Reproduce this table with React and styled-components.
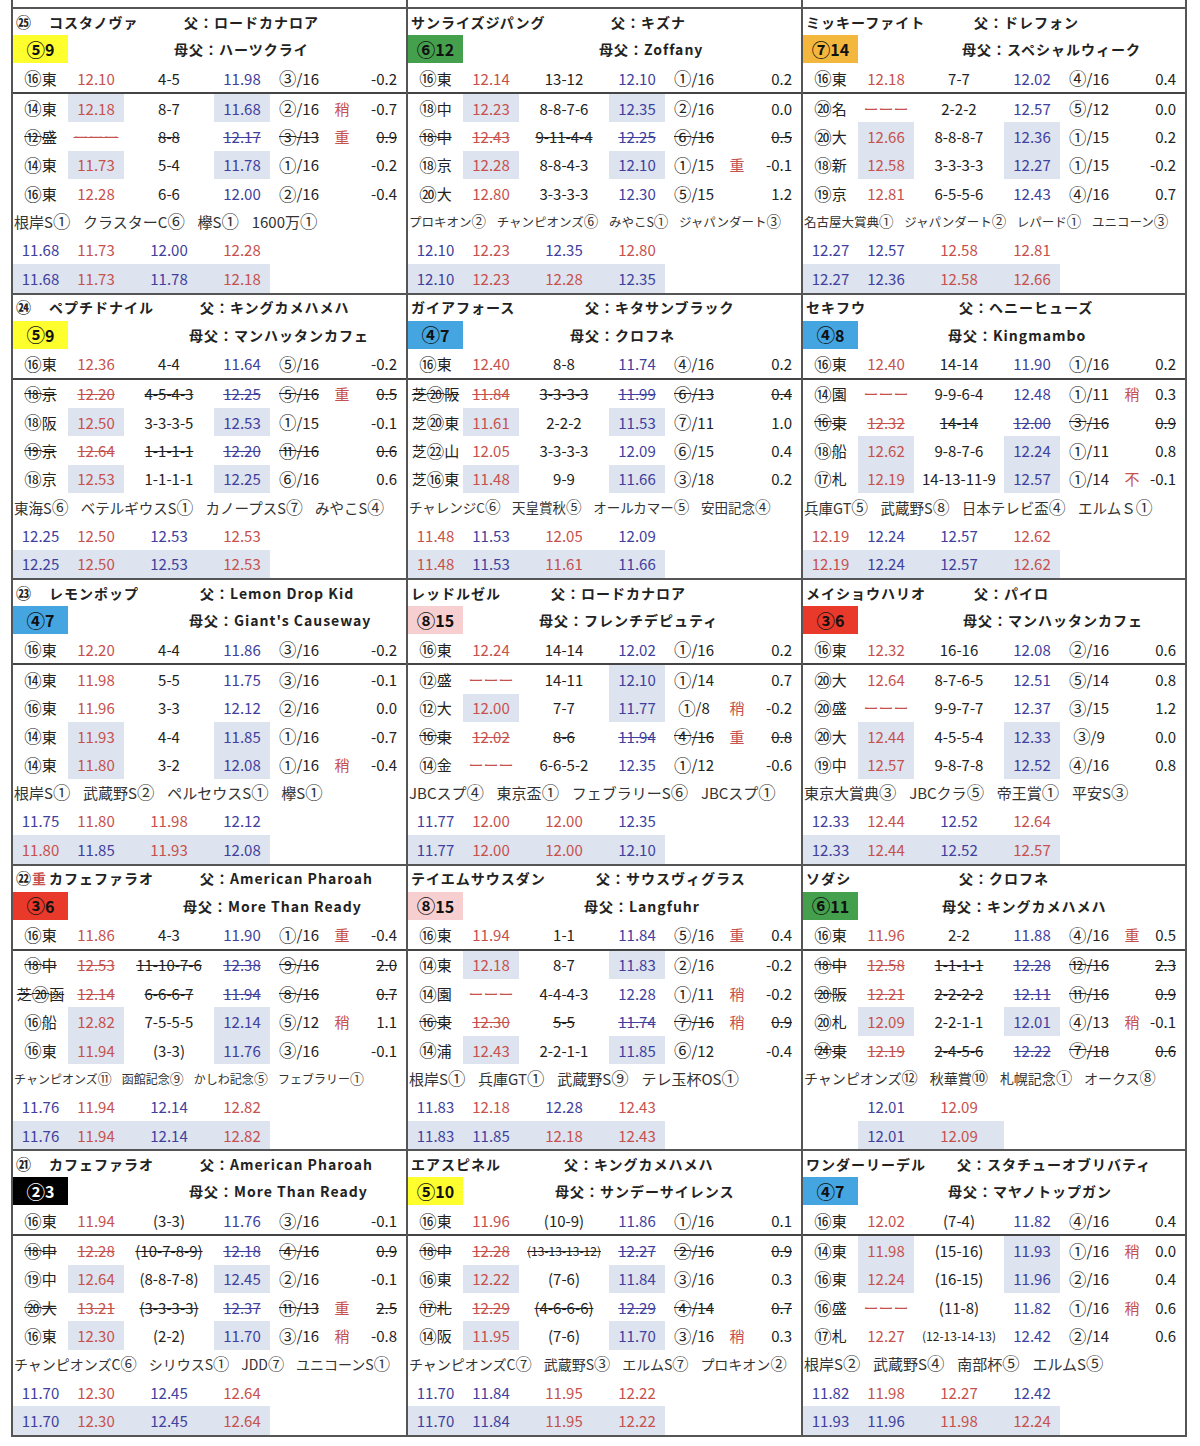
import React from 'react';
import styled, { createGlobalStyle, css } from 'styled-components';

const RED = '#c6514d';
const BLUE = '#40409e';
const HL = '#dde3ef';
const LINE = '#555';

const GlobalStyle = createGlobalStyle`
  html, body {
    margin: 0;
    padding: 0;
    background: #fff;
  }
  body {
    font-family: "Noto Sans CJK JP", "Noto Sans", sans-serif;
    color: #222;
  }
  * {
    box-sizing: border-box;
  }
`;

const WAKU = {
  1: ['#fff', '#111'],
  2: ['#000', '#fff'],
  3: ['#e8392b', '#111'],
  4: ['#45a5e0', '#111'],
  5: ['#ffff2e', '#111'],
  6: ['#45a04d', '#111'],
  7: ['#f3b73d', '#111'],
  8: ['#f8cfd0', '#111'],
};

const horses = [
  {
    no: '㉕', name: 'コスタノヴァ', sire: 'ロードカナロア', sireAt: 171, dam: 'ハーツクライ', damAt: 161, waku: 5, ban: 9,
    main: ['⑯東', '12.10', '4-5', '11.98', '③/16', '', '-0.2', ''],
    past: [
      ['⑭東', '12.18', '8-7', '11.68', '②/16', '稍', '-0.7', '24'],
      ['⑫盛', 'ーーー', '8-8', '12.17', '③/13', '重', '0.9', 's'],
      ['⑭東', '11.73', '5-4', '11.78', '①/16', '', '-0.2', '24'],
      ['⑯東', '12.28', '6-6', '12.00', '②/16', '', '-0.4', ''],
    ],
    wins: ['根岸S①', 'クラスターC⑥', '欅S①', '1600万①'], winSize: 15,
    nums: ['b11.68', 'r11.73', 'b12.00', 'r12.28'],
    nums2: ['b11.68', 'r11.73', 'b11.78', 'r12.18'],
  },
  {
    name: 'サンライズジパング', sire: 'キズナ', sireAt: 203, dam: 'Zoffany', damAt: 191, waku: 6, ban: 12,
    main: ['⑯東', '12.14', '13-12', '12.10', '①/16', '', '0.2', ''],
    past: [
      ['⑱中', '12.23', '8-8-7-6', '12.35', '②/16', '', '0.0', '24'],
      ['⑱中', '12.43', '9-11-4-4', '12.25', '⑥/16', '', '0.5', 's'],
      ['⑱京', '12.28', '8-8-4-3', '12.10', '①/15', '重', '-0.1', '24'],
      ['⑳大', '12.80', '3-3-3-3', '12.30', '⑤/15', '', '1.2', ''],
    ],
    wins: ['プロキオン②', 'チャンピオンズ⑥', 'みやこS①', 'ジャパンダート③'], winSize: 12.5,
    nums: ['b12.10', 'r12.23', 'b12.35', 'r12.80'],
    nums2: ['b12.10', 'r12.23', 'r12.28', 'b12.35'],
  },
  {
    name: 'ミッキーファイト', sire: 'ドレフォン', sireAt: 171, dam: 'スペシャルウィーク', damAt: 159, waku: 7, ban: 14,
    main: ['⑯東', '12.18', '7-7', '12.02', '④/16', '', '0.4', ''],
    past: [
      ['⑳名', 'ーーー', '2-2-2', '12.57', '⑤/12', '', '0.0', ''],
      ['⑳大', '12.66', '8-8-8-7', '12.36', '①/15', '', '0.2', '24'],
      ['⑱新', '12.58', '3-3-3-3', '12.27', '①/15', '', '-0.2', '24'],
      ['⑲京', '12.81', '6-5-5-6', '12.43', '④/16', '', '0.7', ''],
    ],
    wins: ['名古屋大賞典①', 'ジャパンダート②', 'レパード①', 'ユニコーン③'], winSize: 12.5,
    nums: ['b12.27', 'b12.57', 'r12.58', 'r12.81'],
    nums2: ['b12.27', 'b12.36', 'r12.58', 'r12.66'],
  },
  {
    no: '㉔', name: 'ペプチドナイル', sire: 'キングカメハメハ', sireAt: 187, dam: 'マンハッタンカフェ', damAt: 176, waku: 5, ban: 9,
    main: ['⑯東', '12.36', '4-4', '11.64', '⑤/16', '', '-0.2', ''],
    past: [
      ['⑱京', '12.20', '4-5-4-3', '12.25', '⑤/16', '重', '0.5', 's'],
      ['⑱阪', '12.50', '3-3-3-5', '12.53', '①/15', '', '-0.1', '24'],
      ['⑲京', '12.64', '1-1-1-1', '12.20', '⑪/16', '', '0.6', 's'],
      ['⑱京', '12.53', '1-1-1-1', '12.25', '⑥/16', '', '0.6', '24'],
    ],
    wins: ['東海S⑥', 'ベテルギウスS①', 'カノープスS⑦', 'みやこS④'], winSize: 14.5,
    nums: ['b12.25', 'r12.50', 'b12.53', 'r12.53'],
    nums2: ['b12.25', 'r12.50', 'b12.53', 'r12.53'],
  },
  {
    name: 'ガイアフォース', sire: 'キタサンブラック', sireAt: 177, dam: 'クロフネ', damAt: 162, waku: 4, ban: 7,
    main: ['⑯東', '12.40', '8-8', '11.74', '④/16', '', '0.2', ''],
    past: [
      ['芝⑳阪', '11.84', '3-3-3-3', '11.99', '⑥/13', '', '0.4', 's'],
      ['芝⑳東', '11.61', '2-2-2', '11.53', '⑦/11', '', '1.0', '24'],
      ['芝㉒山', '12.05', '3-3-3-3', '12.09', '⑥/15', '', '0.4', ''],
      ['芝⑯東', '11.48', '9-9', '11.66', '③/18', '', '0.2', '24'],
    ],
    wins: ['チャレンジC⑥', '天皇賞秋⑤', 'オールカマー⑤', '安田記念④'], winSize: 13.5,
    nums: ['r11.48', 'b11.53', 'r12.05', 'b12.09'],
    nums2: ['r11.48', 'b11.53', 'r11.61', 'b11.66'],
  },
  {
    name: 'セキフウ', sire: 'ヘニーヒューズ', sireAt: 156, dam: 'Kingmambo', damAt: 145, waku: 4, ban: 8,
    main: ['⑯東', '12.40', '14-14', '11.90', '①/16', '', '0.2', ''],
    past: [
      ['⑭園', 'ーーー', '9-9-6-4', '12.48', '①/11', '稍', '0.3', ''],
      ['⑯東', '12.32', '14-14', '12.00', '③/16', '', '0.9', 's'],
      ['⑱船', '12.62', '9-8-7-6', '12.24', '①/11', '', '0.8', '24'],
      ['⑰札', '12.19', '14-13-11-9', '12.57', '①/14', '不', '-0.1', '24'],
    ],
    wins: ['兵庫GT⑤', '武蔵野S⑧', '日本テレビ盃④', 'エルムＳ①'], winSize: 14.5,
    nums: ['r12.19', 'b12.24', 'b12.57', 'r12.62'],
    nums2: ['r12.19', 'b12.24', 'b12.57', 'r12.62'],
  },
  {
    no: '㉓', name: 'レモンポップ', sire: 'Lemon Drop Kid', sireAt: 187, dam: "Giant's Causeway", damAt: 176, waku: 4, ban: 7,
    main: ['⑯東', '12.20', '4-4', '11.86', '③/16', '', '-0.2', ''],
    past: [
      ['⑭東', '11.98', '5-5', '11.75', '③/16', '', '-0.1', ''],
      ['⑯東', '11.96', '3-3', '12.12', '②/16', '', '0.0', ''],
      ['⑭東', '11.93', '4-4', '11.85', '①/16', '', '-0.7', '24'],
      ['⑭東', '11.80', '3-2', '12.08', '①/16', '稍', '-0.4', '24'],
    ],
    wins: ['根岸S①', '武蔵野S②', 'ペルセウスS①', '欅S①'], winSize: 15,
    nums: ['b11.75', 'r11.80', 'r11.98', 'b12.12'],
    nums2: ['r11.80', 'b11.85', 'r11.93', 'b12.08'],
  },
  {
    name: 'レッドルゼル', sire: 'ロードカナロア', sireAt: 143, dam: 'フレンチデピュティ', damAt: 131, waku: 8, ban: 15,
    main: ['⑯東', '12.24', '14-14', '12.02', '①/16', '', '0.2', ''],
    past: [
      ['⑫盛', 'ーーー', '14-11', '12.10', '①/14', '', '0.7', '4'],
      ['⑫大', '12.00', '7-7', '11.77', '①/8', '稍', '-0.2', '24'],
      ['⑯東', '12.02', '8-6', '11.94', '④/16', '重', '0.8', 's'],
      ['⑭金', 'ーーー', '6-6-5-2', '12.35', '①/12', '', '-0.6', ''],
    ],
    wins: ['JBCスプ④', '東京盃①', 'フェブラリーS⑥', 'JBCスプ①'], winSize: 15,
    nums: ['b11.77', 'r12.00', 'r12.00', 'b12.35'],
    nums2: ['b11.77', 'r12.00', 'r12.00', 'b12.10'],
  },
  {
    name: 'メイショウハリオ', sire: 'パイロ', sireAt: 171, dam: 'マンハッタンカフェ', damAt: 160, waku: 3, ban: 6,
    main: ['⑯東', '12.32', '16-16', '12.08', '②/16', '', '0.6', ''],
    past: [
      ['⑳大', '12.64', '8-7-6-5', '12.51', '⑤/14', '', '0.8', ''],
      ['⑳盛', 'ーーー', '9-9-7-7', '12.37', '③/15', '', '1.2', ''],
      ['⑳大', '12.44', '4-5-5-4', '12.33', '③/9', '', '0.0', '24'],
      ['⑲中', '12.57', '9-8-7-8', '12.52', '④/16', '', '0.8', '24'],
    ],
    wins: ['東京大賞典③', 'JBCクラ⑤', '帝王賞①', '平安S③'], winSize: 15,
    nums: ['b12.33', 'r12.44', 'b12.52', 'r12.64'],
    nums2: ['b12.33', 'r12.44', 'b12.52', 'r12.57'],
  },
  {
    no: '㉒', heavy: true, name: 'カフェファラオ', sire: 'American Pharoah', sireAt: 187, dam: 'More Than Ready', damAt: 170, waku: 3, ban: 6,
    main: ['⑯東', '11.86', '4-3', '11.90', '①/16', '重', '-0.4', ''],
    past: [
      ['⑱中', '12.53', '11-10-7-6', '12.38', '⑨/16', '', '2.0', 's'],
      ['芝⑳函', '12.14', '6-6-6-7', '11.94', '⑧/16', '', '0.7', 's'],
      ['⑯船', '12.82', '7-5-5-5', '12.14', '⑤/12', '稍', '1.1', '24'],
      ['⑯東', '11.94', '(3-3)', '11.76', '③/16', '', '-0.1', '24'],
    ],
    wins: ['チャンピオンズ⑪', '函館記念⑨', 'かしわ記念⑤', 'フェブラリー①'], winSize: 12,
    nums: ['b11.76', 'r11.94', 'b12.14', 'r12.82'],
    nums2: ['b11.76', 'r11.94', 'b12.14', 'r12.82'],
  },
  {
    name: 'テイエムサウスダン', sire: 'サウスヴィグラス', sireAt: 188, dam: 'Langfuhr', damAt: 176, waku: 8, ban: 15,
    main: ['⑯東', '11.94', '1-1', '11.84', '⑤/16', '重', '0.4', ''],
    past: [
      ['⑭東', '12.18', '8-7', '11.83', '②/16', '', '-0.2', '24'],
      ['⑭園', 'ーーー', '4-4-4-3', '12.28', '①/11', '稍', '-0.2', ''],
      ['⑯東', '12.30', '5-5', '11.74', '⑦/16', '稍', '0.9', 's'],
      ['⑭浦', '12.43', '2-2-1-1', '11.85', '⑥/12', '', '-0.4', '24'],
    ],
    wins: ['根岸S①', '兵庫GT①', '武蔵野S⑨', 'テレ玉杯OS①'], winSize: 15,
    nums: ['b11.83', 'r12.18', 'b12.28', 'r12.43'],
    nums2: ['b11.83', 'b11.85', 'r12.18', 'r12.43'],
  },
  {
    name: 'ソダシ', sire: 'クロフネ', sireAt: 156, dam: 'キングカメハメハ', damAt: 139, waku: 6, ban: 11,
    main: ['⑯東', '11.96', '2-2', '11.88', '④/16', '重', '0.5', ''],
    past: [
      ['⑱中', '12.58', '1-1-1-1', '12.28', '⑫/16', '', '2.3', 's'],
      ['⑳阪', '12.21', '2-2-2-2', '12.11', '⑪/16', '', '0.9', 's'],
      ['⑳札', '12.09', '2-2-1-1', '12.01', '④/13', '稍', '-0.1', '24'],
      ['㉔東', '12.19', '2-4-5-6', '12.22', '⑦/18', '', '0.6', 's'],
    ],
    wins: ['チャンピオンズ⑫', '秋華賞⑩', '札幌記念①', 'オークス⑧'], winSize: 14,
    nums: ['', 'b12.01', 'r12.09', ''],
    nums2: ['', 'b12.01', 'r12.09', ''],
  },
  {
    no: '㉑', name: 'カフェファラオ', sire: 'American Pharoah', sireAt: 187, dam: 'More Than Ready', damAt: 176, waku: 2, ban: 3,
    main: ['⑯東', '11.94', '(3-3)', '11.76', '③/16', '', '-0.1', ''],
    past: [
      ['⑱中', '12.28', '(10-7-8-9)', '12.18', '④/16', '', '0.9', 's'],
      ['⑲中', '12.64', '(8-8-7-8)', '12.45', '②/16', '', '-0.1', '24'],
      ['⑳大', '13.21', '(3-3-3-3)', '12.37', '⑪/13', '重', '2.5', 's'],
      ['⑯東', '12.30', '(2-2)', '11.70', '③/16', '稍', '-0.8', '24'],
    ],
    wins: ['チャンピオンズC⑥', 'シリウスS①', 'JDD⑦', 'ユニコーンS①'], winSize: 14,
    nums: ['b11.70', 'r12.30', 'b12.45', 'r12.64'],
    nums2: ['b11.70', 'r12.30', 'b12.45', 'r12.64'],
  },
  {
    name: 'エアスピネル', sire: 'キングカメハメハ', sireAt: 156, dam: 'サンデーサイレンス', damAt: 147, waku: 5, ban: 10,
    main: ['⑯東', '11.96', '(10-9)', '11.86', '①/16', '', '0.1', ''],
    past: [
      ['⑱中', '12.28', '(13-13-13-12)', '12.27', '②/16', '', '0.9', 's'],
      ['⑯東', '12.22', '(7-6)', '11.84', '③/16', '', '0.3', '24'],
      ['⑰札', '12.29', '(4-6-6-6)', '12.29', '④/14', '', '0.7', 's'],
      ['⑭阪', '11.95', '(7-6)', '11.70', '③/16', '稍', '0.3', '24'],
    ],
    wins: ['チャンピオンズC⑦', '武蔵野S③', 'エルムS⑦', 'プロキオン②'], winSize: 14,
    nums: ['b11.70', 'b11.84', 'r11.95', 'r12.22'],
    nums2: ['b11.70', 'b11.84', 'r11.95', 'r12.22'],
  },
  {
    name: 'ワンダーリーデル', sire: 'スタチューオブリバティ', sireAt: 154, dam: 'マヤノトップガン', damAt: 145, waku: 4, ban: 7,
    main: ['⑯東', '12.02', '(7-4)', '11.82', '④/16', '', '0.4', ''],
    past: [
      ['⑭東', '11.98', '(15-16)', '11.93', '①/16', '稍', '0.0', '24'],
      ['⑯東', '12.24', '(16-15)', '11.96', '②/16', '', '0.4', '24'],
      ['⑯盛', 'ーーー', '(11-8)', '11.82', '①/16', '稍', '0.6', ''],
      ['⑰札', '12.27', '(12-13-14-13)', '12.42', '②/14', '', '0.6', ''],
    ],
    wins: ['根岸S②', '武蔵野S④', '南部杯⑤', 'エルムS⑤'], winSize: 15,
    nums: ['b11.82', 'r11.98', 'r12.27', 'b12.42'],
    nums2: ['b11.93', 'b11.96', 'r11.98', 'r12.24'],
  },
];

const Board = styled.main`
  display: grid;
  grid-template-columns: 395px 395px 384px;
  width: 1176px;
  margin-left: 11px;
  border-right: 2px solid ${LINE};
  border-bottom: 2px solid ${LINE};
`;

const Stub = styled.div`
  height: 7px;
  border-left: 2px solid ${LINE};
`;

const Card = styled.section`
  display: flex;
  flex-direction: column;
  min-width: 0;
  overflow: hidden;
  border-left: 2px solid ${LINE};
  border-top: 2px solid ${LINE};
`;

const Head = styled.div`
  display: grid;
  grid-template-columns: ${p => p.$at}px 1fr;
  align-items: center;
  height: 25px;
  font-size: 14px;
  font-weight: 700;
  letter-spacing: 1px;
  white-space: nowrap;
`;

const Name = styled.div`
  padding-left: 3px;
  overflow: visible;
`;

const No = styled.span`
  display: inline-block;
  min-width: 33px;
  font-size: 13px;
  letter-spacing: 0;
`;

const Heavy = styled.span`
  color: ${RED};
  font-size: 14px;
  margin-left: 1px;
`;

const BadgeRow = styled.div`
  display: grid;
  grid-template-columns: 55px 1fr;
  align-items: center;
  height: 30px;
`;

const Badge = styled.div`
  display: flex;
  align-items: center;
  justify-content: center;
  height: 28px;
  background: ${p => p.$bg};
  color: ${p => p.$fg};
  font-size: 16px;
  font-weight: 700;
`;

const DamSire = styled.div`
  padding-left: ${p => p.$indent}px;
  font-size: 14px;
  font-weight: 700;
  letter-spacing: 1px;
  white-space: nowrap;
`;

const Row = styled.div`
  display: grid;
  grid-template-columns: 55px 56px 90px 56px 58px 28px 1fr;
  height: ${p => p.$h}px;
  ${p => p.$rule && css`
    border-bottom: 2px solid #444;
  `}
`;

const toneColor = t => (t === 'r' ? RED : t === 'b' ? BLUE : '#222');

const Cell = styled.div`
  display: flex;
  align-items: center;
  justify-content: ${p => (p.$right ? 'flex-end' : 'center')};
  padding-right: ${p => (p.$right ? '9px' : '0')};
  font-size: ${p => (p.$small ? '12px' : '15px')};
  color: ${p => toneColor(p.$tone)};
  background: ${p => (p.$hl ? HL : 'transparent')};
  text-decoration: ${p => (p.$strike ? 'line-through' : 'none')};
  white-space: nowrap;
`;

const Wins = styled.div`
  display: flex;
  align-items: center;
  gap: 0.85em;
  height: 28px;
  padding-left: 1px;
  font-size: ${p => p.$size}px;
  color: #333;
  white-space: nowrap;
`;

// circled digits come out small in the CJK font, so bump them up a little
const Circ = styled.span`
  font-size: 1.16em;
  line-height: 1;
`;

const CIRCLED = /([\u2460-\u24ff\u3251-\u325f\u32b1-\u32bf])/;

const Txt = ({ children }) =>
  String(children)
    .split(CIRCLED)
    .map((part, i) => (CIRCLED.test(part) ? <Circ key={i}>{part}</Circ> : part));

const circled = n => String.fromCharCode(0x2460 + n - 1);

const RaceRow = ({ r, h, rule }) => {
  const [venue, lap, pos, last, rank, going, diff, flags] = r;
  const strike = flags.includes('s');
  return (
    <Row $h={h} $rule={rule}>
      <Cell $strike={strike}><Txt>{venue}</Txt></Cell>
      <Cell $tone="r" $hl={flags.includes('2')} $strike={strike}>{lap}</Cell>
      <Cell $strike={strike} $small={pos.length > 11}>{pos}</Cell>
      <Cell $tone="b" $hl={flags.includes('4')} $strike={strike}>{last}</Cell>
      <Cell $strike={strike}><Txt>{rank}</Txt></Cell>
      <Cell $tone="r">{going}</Cell>
      <Cell $right $strike={strike}>{diff}</Cell>
    </Row>
  );
};

const NumRow = ({ values, h, shaded }) => (
  <Row $h={h}>
    {values.map((v, i) => (
      <Cell key={i} $tone={v[0]} $hl={shaded && v !== ''}>
        {v.slice(1)}
      </Cell>
    ))}
  </Row>
);

const HorseCard = ({ d }) => {
  const [bg, fg] = WAKU[d.waku];
  return (
    <Card>
      <Head $at={d.sireAt}>
        <Name>
          {d.no && (
            <No>
              <Circ>{d.no}</Circ>
              {d.heavy && <Heavy>重</Heavy>}
            </No>
          )}
          {d.name}
        </Name>
        <div>父：{d.sire}</div>
      </Head>
      <BadgeRow>
        <Badge $bg={bg} $fg={fg}>
          <Circ>{circled(d.waku)}</Circ>
          {d.ban}
        </Badge>
        <DamSire $indent={d.damAt - 55}>母父：{d.dam}</DamSire>
      </BadgeRow>
      <RaceRow r={d.main} h={30} rule />
      {d.past.map((r, i) => (
        <RaceRow key={i} r={r} h={28.4} />
      ))}
      <Wins $size={d.winSize}>
        {d.wins.map(w => (
          <span key={w}><Txt>{w}</Txt></span>
        ))}
      </Wins>
      <NumRow values={d.nums} h={28.5} />
      <NumRow values={d.nums2} h={28.5} shaded />
    </Card>
  );
};

export default function App() {
  return (
    <>
      <GlobalStyle />
      <Board>
        <Stub />
        <Stub />
        <Stub />
        {horses.map((d, i) => (
          <HorseCard key={i} d={d} />
        ))}
      </Board>
    </>
  );
}
